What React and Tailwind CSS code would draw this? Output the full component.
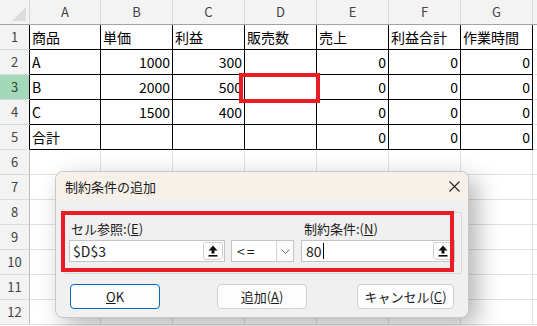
import React from 'react';

const cols = ['A', 'B', 'C', 'D', 'E', 'F', 'G', 'H'];

const data = [
  ['商品', '単価', '利益', '販売数', '売上', '利益合計', '作業時間'],
  ['A', '1000', '300', '', '0', '0', '0'],
  ['B', '2000', '500', '', '0', '0', '0'],
  ['C', '1500', '400', '', '0', '0', '0'],
  ['合計', '', '', '', '0', '0', '0'],
];

const font = { fontFamily: '"Noto Sans CJK JP", "Liberation Sans", sans-serif' };

function UploadIcon() {
  return (
    <svg width="10" height="12" viewBox="0 0 10 12">
      <polygon points="5,0.5 9.5,5.5 6.5,5.5 6.5,8.5 3.5,8.5 3.5,5.5 0.5,5.5" fill="#111" />
      <rect x="0.5" y="10" width="9" height="1.6" fill="#111" />
    </svg>
  );
}

function UploadButton() {
  return (
    <div className="w-[20px] h-[18px] mr-[1px] flex items-center justify-center bg-white border border-[#cfcfcf] rounded-[3px]">
      <UploadIcon />
    </div>
  );
}

function Sheet() {
  const rows = [];
  // header row
  rows.push(
    <div key="corner" className="relative bg-[#f3f3f3] border-r border-b border-r-[#d5d5d5] border-b-[#a3a3a3]">
      <svg className="absolute right-[3px] bottom-[3px]" width="14" height="14" viewBox="0 0 14 14">
        <polygon points="14,0 14,14 0,14" fill="#dcdcdc" />
      </svg>
    </div>
  );
  cols.forEach((c) => {
    rows.push(
      <div key={'h' + c} className="bg-[#f3f3f3] border-r border-b border-r-[#dadada] border-b-[#a3a3a3] flex items-center justify-center text-[13px] text-[#444]">
        {c === 'H' ? '' : c}
      </div>
    );
  });
  for (let r = 1; r <= 12; r++) {
    const inTable = r <= 5;
    rows.push(
      <div
        key={'r' + r}
        className={`border-r border-b border-b-[#dadada] flex items-center justify-center text-[13px] ${
          r === 3 ? 'bg-[#a3d8b8] text-[#2c4a38]' : 'bg-[#f3f3f3] text-[#444]'
        } ${inTable ? 'border-r-black' : 'border-r-[#bdbdbd]'}`}
      >
        {r}
      </div>
    );
    cols.forEach((c, ci) => {
      const val = inTable && ci < 7 ? data[r - 1][ci] : '';
      const dark = inTable && ci < 7;
      const num = /^\d+$/.test(val);
      rows.push(
        <div
          key={c + r}
          className={`border-r border-b bg-white flex items-center text-[14px] text-black px-[2px] ${
            dark ? 'border-black' : 'border-[#e1e1e1]'
          } ${num ? 'justify-end' : 'justify-start'}`}
        >
          {val}
        </div>
      );
    });
  }
  return (
    <div className="grid grid-cols-[30px_71px_repeat(6,72px)_1fr] grid-rows-[25px] auto-rows-[25px]">
      {rows}
    </div>
  );
}

function Dialog() {
  return (
    <div className="absolute left-[55px] top-[171px] w-[414px] h-[147px] rounded-[8px] border border-[#c8c8c8] bg-[#f0f0f0] shadow-[8px_8px_24px_rgba(0,0,0,0.3)] overflow-hidden flex flex-col text-[#1b1b1b]">
      <div className="h-[29px] bg-[#f6f0e8] flex items-center justify-between pl-[9px] pr-[8px] text-[13px]">
        <span>制約条件の追加</span>
        <svg width="11" height="11" viewBox="0 0 11 11">
          <path d="M0.5 0.5 L10.5 10.5 M10.5 0.5 L0.5 10.5" stroke="#222" strokeWidth="1.1" />
        </svg>
      </div>
      <div className="relative flex-1">
        {/* group frame */}
        <div className="ml-[7px] mt-[11px] w-[399px] h-[62px] border border-[#d9d9d9] rounded-[2px] pl-[5px] pt-[8px]">
          <div className="flex items-end">
            <div className="w-[156px] flex flex-col">
              <div className="h-[19px] pl-[2px] text-[13px] leading-[16px]">
                セル参照:(<span className="underline">E</span>)
              </div>
              <div className="h-[22px] bg-white border border-[#c4c4c4] flex items-center justify-between pl-[3px] text-[14px]">
                <span>$D$3</span>
                <UploadButton />
              </div>
            </div>
            <div className="ml-[6px] w-[63px] h-[22px] bg-white border border-[#c4c4c4] flex items-center text-[14px]">
              <span className="flex-1 pl-[5px] tracking-[2px]">&lt;=</span>
              <div className="w-[17px] h-full border-l border-[#d4d4d4] bg-[#fafafa] flex items-center justify-center">
                <svg width="9" height="5" viewBox="0 0 9 5">
                  <polyline points="0.5,0.5 4.5,4.5 8.5,0.5" fill="none" stroke="#777" strokeWidth="1" />
                </svg>
              </div>
            </div>
            <div className="ml-[7px] w-[154px] flex flex-col">
              <div className="h-[19px] pl-[3px] text-[13px] leading-[16px]">
                制約条件:(<span className="underline">N</span>)
              </div>
              <div className="h-[22px] bg-white border border-[#c4c4c4] flex items-center justify-between pl-[4px] text-[14px]">
                <span className="flex items-center">
                  80<span className="inline-block w-[1px] h-[16px] bg-black ml-[1px]" />
                </span>
                <UploadButton />
              </div>
            </div>
          </div>
        </div>
        {/* buttons */}
        <div className="flex items-center pl-[14px] mt-[10px] text-[13px]">
          <div className="w-[90px] h-[25px] rounded-[4px] border border-[#0067c0] bg-[#fdfdfd] flex items-center justify-center">
            <span className="underline">O</span>K
          </div>
          <div className="ml-[57px] w-[90px] h-[25px] rounded-[4px] border border-[#d0d0d0] bg-[#fdfdfd] flex items-center justify-center">
            追加(<span className="underline">A</span>)
          </div>
          <div className="ml-[50px] w-[97px] h-[25px] rounded-[4px] border border-[#d0d0d0] bg-[#fdfdfd] flex items-center justify-center">
            キャンセル(<span className="underline">C</span>)
          </div>
        </div>
        {/* red annotation */}
        <div className="absolute left-[5px] top-[10px] w-[393px] h-[61px] border-4 border-[#ec1c24] pointer-events-none" />
      </div>
    </div>
  );
}

export default function App() {
  return (
    <div className="relative w-[537px] h-[326px] overflow-hidden bg-white" style={font}>
      <Sheet />
      {/* red annotation on D3 */}
      <div className="absolute left-[239px] top-[73px] w-[81px] h-[30px] border-4 border-[#ec1c24]" />
      <Dialog />
    </div>
  );
}
